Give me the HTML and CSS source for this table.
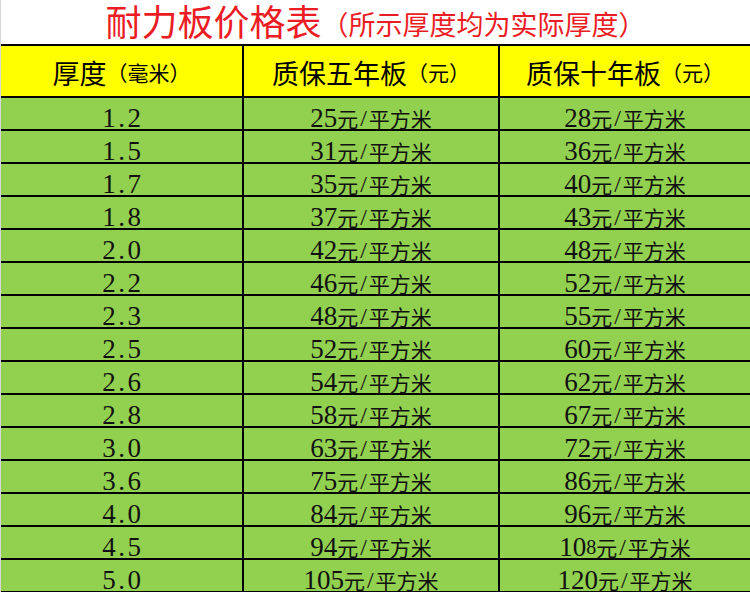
FILE: index.html
```html
<!DOCTYPE html>
<html lang="zh-CN">
<head>
<meta charset="utf-8">
<title>耐力板价格表</title>
<link rel="stylesheet" href="styles.css">
</head>
<body>
<div class="page">
  <div class="title"><span class="t-main">耐力板价格表</span><span class="t-sub">（所示厚度均为实际厚度）</span></div>
  <div class="grid">
    <div class="cell head"><span class="h-main">厚度</span><span class="h-sub">（毫米）</span></div>
    <div class="cell head"><span class="h-main">质保五年板</span><span class="h-sub">（元）</span></div>
    <div class="cell head"><span class="h-main">质保十年板</span><span class="h-sub">（元）</span></div>

    <div class="cell data"><span class="th">1.2</span></div>
    <div class="cell data"><span class="n">25</span><span class="u">元</span><span class="sl">/</span><span class="u">平方米</span></div>
    <div class="cell data"><span class="n">28</span><span class="u">元</span><span class="sl">/</span><span class="u">平方米</span></div>

    <div class="cell data"><span class="th">1.5</span></div>
    <div class="cell data"><span class="n">31</span><span class="u">元</span><span class="sl">/</span><span class="u">平方米</span></div>
    <div class="cell data"><span class="n">36</span><span class="u">元</span><span class="sl">/</span><span class="u">平方米</span></div>

    <div class="cell data"><span class="th">1.7</span></div>
    <div class="cell data"><span class="n">35</span><span class="u">元</span><span class="sl">/</span><span class="u">平方米</span></div>
    <div class="cell data"><span class="n">40</span><span class="u">元</span><span class="sl">/</span><span class="u">平方米</span></div>

    <div class="cell data"><span class="th">1.8</span></div>
    <div class="cell data"><span class="n">37</span><span class="u">元</span><span class="sl">/</span><span class="u">平方米</span></div>
    <div class="cell data"><span class="n">43</span><span class="u">元</span><span class="sl">/</span><span class="u">平方米</span></div>

    <div class="cell data"><span class="th">2.0</span></div>
    <div class="cell data"><span class="n">42</span><span class="u">元</span><span class="sl">/</span><span class="u">平方米</span></div>
    <div class="cell data"><span class="n">48</span><span class="u">元</span><span class="sl">/</span><span class="u">平方米</span></div>

    <div class="cell data"><span class="th">2.2</span></div>
    <div class="cell data"><span class="n">46</span><span class="u">元</span><span class="sl">/</span><span class="u">平方米</span></div>
    <div class="cell data"><span class="n">52</span><span class="u">元</span><span class="sl">/</span><span class="u">平方米</span></div>

    <div class="cell data"><span class="th">2.3</span></div>
    <div class="cell data"><span class="n">48</span><span class="u">元</span><span class="sl">/</span><span class="u">平方米</span></div>
    <div class="cell data"><span class="n">55</span><span class="u">元</span><span class="sl">/</span><span class="u">平方米</span></div>

    <div class="cell data"><span class="th">2.5</span></div>
    <div class="cell data"><span class="n">52</span><span class="u">元</span><span class="sl">/</span><span class="u">平方米</span></div>
    <div class="cell data"><span class="n">60</span><span class="u">元</span><span class="sl">/</span><span class="u">平方米</span></div>

    <div class="cell data"><span class="th">2.6</span></div>
    <div class="cell data"><span class="n">54</span><span class="u">元</span><span class="sl">/</span><span class="u">平方米</span></div>
    <div class="cell data"><span class="n">62</span><span class="u">元</span><span class="sl">/</span><span class="u">平方米</span></div>

    <div class="cell data"><span class="th">2.8</span></div>
    <div class="cell data"><span class="n">58</span><span class="u">元</span><span class="sl">/</span><span class="u">平方米</span></div>
    <div class="cell data"><span class="n">67</span><span class="u">元</span><span class="sl">/</span><span class="u">平方米</span></div>

    <div class="cell data"><span class="th">3.0</span></div>
    <div class="cell data"><span class="n">63</span><span class="u">元</span><span class="sl">/</span><span class="u">平方米</span></div>
    <div class="cell data"><span class="n">72</span><span class="u">元</span><span class="sl">/</span><span class="u">平方米</span></div>

    <div class="cell data"><span class="th">3.6</span></div>
    <div class="cell data"><span class="n">75</span><span class="u">元</span><span class="sl">/</span><span class="u">平方米</span></div>
    <div class="cell data"><span class="n">86</span><span class="u">元</span><span class="sl">/</span><span class="u">平方米</span></div>

    <div class="cell data"><span class="th">4.0</span></div>
    <div class="cell data"><span class="n">84</span><span class="u">元</span><span class="sl">/</span><span class="u">平方米</span></div>
    <div class="cell data"><span class="n">96</span><span class="u">元</span><span class="sl">/</span><span class="u">平方米</span></div>

    <div class="cell data"><span class="th">4.5</span></div>
    <div class="cell data"><span class="n">94</span><span class="u">元</span><span class="sl">/</span><span class="u">平方米</span></div>
    <div class="cell data"><span class="n">10</span><span class="n-small">8</span><span class="u">元</span><span class="sl">/</span><span class="u">平方米</span></div>

    <div class="cell data"><span class="th">5.0</span></div>
    <div class="cell data"><span class="n">105</span><span class="u">元</span><span class="sl">/</span><span class="u">平方米</span></div>
    <div class="cell data"><span class="n">120</span><span class="u">元</span><span class="sl">/</span><span class="u">平方米</span></div>
  </div>
</div>
</body>
</html>
```

FILE: styles.css
```css
html, body {
  margin: 0;
  padding: 0;
  background: #ffffff;
}

.page {
  width: 750px;
  box-sizing: border-box;
  border-left: 1px solid #d6d6d6;
  font-family: "Liberation Serif", "Noto Sans CJK SC", serif;
  color: #111;
}

.title {
  height: 44px;
  display: flex;
  align-items: flex-end;
  justify-content: center;
  color: #ec1c24;
  font-family: "Noto Sans CJK SC", sans-serif;
  line-height: 1;
  box-sizing: border-box;
  padding-bottom: 6px;
  overflow: visible;
}

.t-main {
  font-size: 36px;
  line-height: 36px;
}

.t-sub {
  font-size: 27px;
  line-height: 27px;
  padding-bottom: 1px;
}

.grid {
  display: grid;
  grid-template-columns: 241px 254px 250px;
  grid-template-rows: 50px repeat(15, 31px);
  column-gap: 2px;
  row-gap: 2px;
  padding: 2px 0;
  background: #000;
}

.cell {
  display: flex;
  justify-content: center;
}

.head {
  background: #ffff00;
  align-items: center;
  font-family: "Noto Sans CJK SC", sans-serif;
  color: #000;
  line-height: 1;
  padding-top: 3px;
  box-sizing: border-box;
}

.h-main {
  font-size: 27px;
}

.h-sub {
  font-size: 21px;
}

.data {
  background: #92d050;
  align-items: flex-end;
  line-height: 22px;
  padding-bottom: 0;
  box-sizing: border-box;
}

.th {
  font-size: 27px;
  letter-spacing: 2.5px;
  margin-right: -2.5px;
}

.n {
  font-size: 27px;
}

.n-small {
  font-size: 20px;
}

.u {
  font-family: "Noto Sans CJK SC", sans-serif;
  font-size: 21px;
}

.sl {
  font-family: "Liberation Serif", serif;
  font-size: 24px;
  padding: 0 2px;
}
```
